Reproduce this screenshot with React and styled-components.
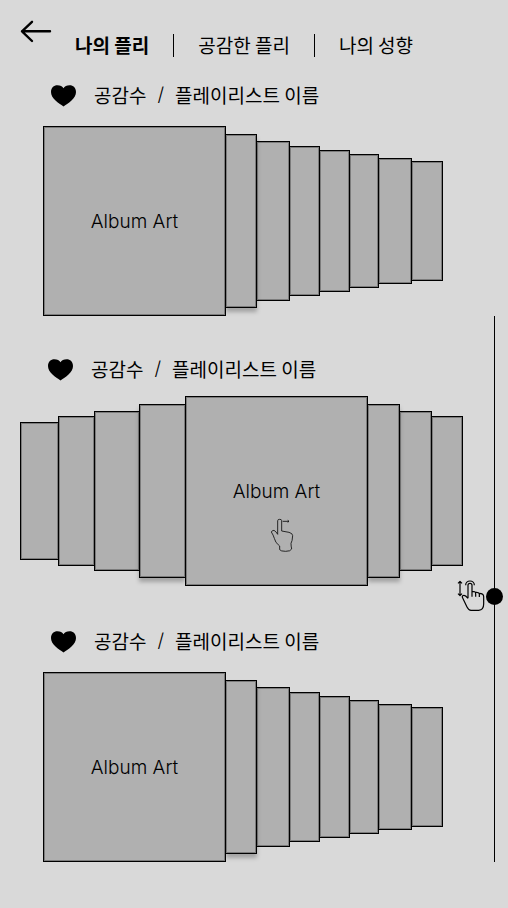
import React, { useState } from "react";
import styled, { createGlobalStyle } from "styled-components";

const GlobalStyle = createGlobalStyle`
  *, *::before, *::after { box-sizing: border-box; }
  body {
    margin: 0;
    background: #d9d9d9;
    color: #000;
    font-family: "Noto Sans CJK KR", "Noto Sans", sans-serif;
    font-size: 19px;
    line-height: 28px;
  }
  button { font: inherit; color: inherit; background: none; border: 0; padding: 0; cursor: pointer; }
  svg { display: block; }
`;

const Page = styled.div`
  display: flex;
  min-height: 100vh;
`;

const Content = styled.main`
  flex: 1;
  min-width: 0;
  padding-bottom: 46px;
`;

const Header = styled.header`
  display: flex;
  align-items: flex-start;
  gap: 23px;
  padding: 20px 20px 0;
`;

const Tabs = styled.nav`
  display: flex;
  align-items: center;
  gap: 24px;
  padding-top: 11px;
  white-space: nowrap;
`;

const Tab = styled.button`
  font-weight: ${(p) => (p.$active ? 700 : 400)};
`;

const Divider = styled.span`
  width: 1px;
  height: 23px;
  background: #000;
`;

const Playlist = styled.section`
  padding: ${(p) => (p.$centered ? "0 17px 0 20px" : "0 37px 0 43px")};
  margin-top: ${(p) => (p.$centered ? 38 : 40)}px;
  ${Header} + & { margin-top: 21px; }
`;

const Heading = styled.h2`
  display: flex;
  align-items: center;
  gap: 18px;
  height: 30px;
  margin: 0 0 ${(p) => (p.$centered ? 12 : 16)}px;
  padding-left: ${(p) => (p.$centered ? 28 : 8)}px;
  font-size: 19px;
  font-weight: 400;
  white-space: nowrap;
`;

const Title = styled.span`
  display: flex;
  gap: 11px;
`;

const Slash = styled.span`
  font-family: Inter, sans-serif;
  font-weight: 300;
`;

const LikeButton = styled.button`
  padding-top: 2px;
`;

const Stack = styled.div`
  display: flex;
  align-items: center;
`;

const Cover = styled.button`
  position: relative;
  z-index: ${(p) => p.$z};
  flex: ${(p) => p.$w} 1 ${(p) => p.$w}px;
  min-width: 0;
  height: ${(p) => p.$h}px;
  background: #b0b0b0;
  border: 1px solid #000;
  ${(p) => p.$side === "right" && "border-left: 0;"}
  ${(p) => p.$side === "left" && "border-right: 0;"}
  box-shadow: inset 0 0 0 1px #7c7c7c${(p) => (p.$raised ? ", 0 4px 4px rgba(0, 0, 0, 0.25)" : "")};
`;

const CoverLabel = styled.span`
  font-family: Inter, sans-serif;
  font-weight: 300;
`;

const SwipeHint = styled.span`
  position: absolute;
  top: 121px;
  left: 84px;
`;

const Rail = styled.aside`
  position: relative;
  display: flex;
  justify-content: center;
  width: 28px;
  margin: 316px 0 46px;
`;

const DragHint = styled.span`
  position: absolute;
  right: 23px;
  top: 264px;
  pointer-events: none;
`;

const Scroller = styled.input`
  appearance: none;
  writing-mode: vertical-lr;
  align-self: stretch;
  width: 17px;
  margin: 0;
  cursor: pointer;
  background: linear-gradient(#000, #000) center / 1px 100% no-repeat;
  &::-webkit-slider-thumb {
    appearance: none;
    width: 17px;
    height: 17px;
    border-radius: 50%;
    background: #000;
  }
`;

const BackIcon = () => (
  <svg width="32" height="23" viewBox="0 0 32 23" fill="none" stroke="#000" strokeWidth="2.4" strokeLinecap="round" strokeLinejoin="round">
    <path d="M2 11.3H30M12 1.8L2 11.3L12 21" />
  </svg>
);

const HeartIcon = () => (
  <svg width="25" height="22" viewBox="0 0 25 22" fill="#000">
    <path d="M12.5 21.5C10.5 19.8 7.5 18.5 4.5 15.5C1.7 12.7 0 10.2 0 7C0 3 2.8 0.3 6.4 0.3C9.2 0.3 11.5 1.3 12.5 3.2C13.5 1.3 15.8 0.3 18.6 0.3C22.2 0.3 25 3 25 7C25 10.2 23.3 12.7 20.5 15.5C17.5 18.5 14.5 19.8 12.5 21.5Z" />
  </svg>
);

const SwipeIcon = () => (
  <svg width="24" height="35" viewBox="150 144 72 105" fill="none" stroke="#111" strokeWidth="2.6" strokeLinejoin="round">
    <path d="M173 193V152Q173 148 179 148T185 152V183L207 187Q218 190 218 197Q217 214 213 220Q213 228 215 237Q212 244 197 244Q182 244 179 239V228Q165 218 163 205Q160 195 154 186Q156 181 162 181Q168 184 173 193Z" />
    <path d="M188 154H207M203 151L207 154L203 157" />
  </svg>
);

const DragIcon = () => (
  <svg width="28" height="32" viewBox="351 600 84 96" fill="none" stroke="#000" strokeWidth="3.6" strokeLinejoin="round">
    <path d="M360 605V646M354 610L360 604L366 610M354 641L360 647L366 641" />
    <path d="M377 616A13 13 0 0 1 403 616" />
    <path d="M384 655V616A6 6 0 0 1 396 616V650M396 635Q407 633 407 641V650M407 637Q418 636 418 643V651M418 640Q431 640 431 650V672Q431 690 416 691H393Q386 691 381 681L367 652Q366 646 372 646Q377 646 384 655" />
  </svg>
);

const FRONT_STACK = [
  { w: 183, h: 190, z: 9, main: true },
  { w: 31, h: 174, z: 8, side: "right", raised: true },
  { w: 33, h: 160, z: 7, side: "right" },
  { w: 30, h: 150, z: 6, side: "right" },
  { w: 30, h: 142, z: 5, side: "right" },
  { w: 29, h: 134, z: 4, side: "right" },
  { w: 33, h: 126, z: 3, side: "right" },
  { w: 31, h: 120, z: 2, side: "right" },
];

const CENTER_STACK = [
  { w: 38, h: 138, z: 5, side: "left" },
  { w: 36, h: 150, z: 6, side: "left" },
  { w: 45, h: 160, z: 7, side: "left" },
  { w: 46, h: 174, z: 8, side: "left", raised: true },
  { w: 183, h: 190, z: 9, main: true, hint: true },
  { w: 32, h: 174, z: 8, side: "right", raised: true },
  { w: 32, h: 160, z: 7, side: "right" },
  { w: 31, h: 150, z: 6, side: "right" },
];

const PLAYLISTS = [
  { id: 1, covers: FRONT_STACK },
  { id: 2, covers: CENTER_STACK, centered: true },
  { id: 3, covers: FRONT_STACK },
];

const TABS = ["나의 플리", "공감한 플리", "나의 성향"];

function PlaylistRow({ covers, centered }) {
  return (
    <Playlist $centered={centered}>
      <Heading $centered={centered}>
        <LikeButton aria-label="공감">
          <HeartIcon />
        </LikeButton>
        <Title>
          <span>공감수</span>
          <Slash>/</Slash>
          <span>플레이리스트 이름</span>
        </Title>
      </Heading>
      <Stack>
        {covers.map((c, i) => (
          <Cover
            key={i}
            $w={c.w}
            $h={c.h}
            $z={c.z}
            $side={c.side}
            $raised={c.raised}
            aria-label={c.main ? undefined : `앨범 ${i + 1}`}
          >
            {c.main && <CoverLabel>Album Art</CoverLabel>}
            {c.hint && (
              <SwipeHint aria-hidden="true">
                <SwipeIcon />
              </SwipeHint>
            )}
          </Cover>
        ))}
      </Stack>
    </Playlist>
  );
}

export default function App() {
  const [tab, setTab] = useState(0);
  const [position, setPosition] = useState(51.5);
  return (
    <>
      <GlobalStyle />
      <Page>
        <Content>
          <Header>
            <button aria-label="뒤로">
              <BackIcon />
            </button>
            <Tabs>
              {TABS.map((name, i) => (
                <React.Fragment key={name}>
                  {i > 0 && <Divider />}
                  <Tab $active={tab === i} onClick={() => setTab(i)}>
                    {name}
                  </Tab>
                </React.Fragment>
              ))}
            </Tabs>
          </Header>
          {PLAYLISTS.map((p) => (
            <PlaylistRow key={p.id} covers={p.covers} centered={p.centered} />
          ))}
        </Content>
        <Rail>
          <Scroller
            type="range"
            min="0"
            max="100"
            step="0.5"
            value={position}
            onChange={(e) => setPosition(Number(e.target.value))}
            aria-label="스크롤 위치"
          />
          <DragHint aria-hidden="true">
            <DragIcon />
          </DragHint>
        </Rail>
      </Page>
    </>
  );
}
